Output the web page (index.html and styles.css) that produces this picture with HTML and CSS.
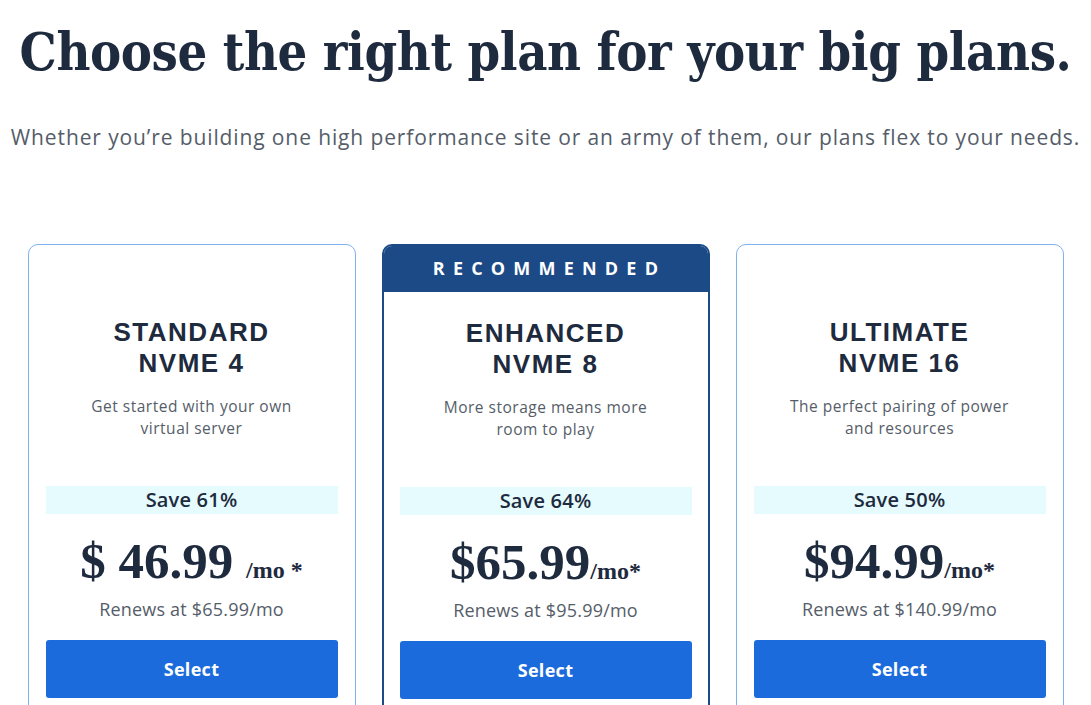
FILE: index.html
```html
<!DOCTYPE html>
<html lang="en">
<head>
<meta charset="utf-8">
<title>Plans</title>
<link rel="stylesheet" href="styles.css">
</head>
<body>
<main class="page">
  <h1 class="headline">Choose the right plan for your big plans.</h1>
  <p class="lead">Whether you’re building one high performance site or an army of them, our plans flex to your needs.</p>
  <section class="plans">
    <article class="card">
      <div class="badge"></div>
      <h2 class="plan-name"><span class="line">STANDARD</span><span class="line">NVME 4</span></h2>
      <p class="plan-desc">Get started with your own<br>virtual server</p>
      <div class="save">Save 61%</div>
      <div class="price">$ 46.99 <span class="per">/mo *</span></div>
      <div class="renew">Renews at $65.99/mo</div>
      <button class="select">Select</button>
    </article>
    <article class="card card-rec">
      <div class="badge">RECOMMENDED</div>
      <h2 class="plan-name"><span class="line">ENHANCED</span><span class="line">NVME 8</span></h2>
      <p class="plan-desc">More storage means more<br>room to play</p>
      <div class="save">Save 64%</div>
      <div class="price">$65.99<span class="per">/mo*</span></div>
      <div class="renew">Renews at $95.99/mo</div>
      <button class="select">Select</button>
    </article>
    <article class="card">
      <div class="badge"></div>
      <h2 class="plan-name"><span class="line">ULTIMATE</span><span class="line">NVME 16</span></h2>
      <p class="plan-desc">The perfect pairing of power<br>and resources</p>
      <div class="save">Save 50%</div>
      <div class="price">$94.99<span class="per">/mo*</span></div>
      <div class="renew">Renews at $140.99/mo</div>
      <button class="select">Select</button>
    </article>
  </section>
</main>
</body>
</html>
```

FILE: styles.css
```css
html, body {
  margin: 0;
  padding: 0;
  background: #ffffff;
}

body {
  font-family: "Open Sans", "Liberation Sans", sans-serif;
  color: #1e2a3d;
  overflow: hidden;
}

.page {
  padding-top: 19px;
}

.headline {
  margin: 0;
  text-align: center;
  font-family: "DejaVu Serif Condensed", "DejaVu Serif", serif;
  font-stretch: condensed;
  font-weight: 700;
  font-size: 52px;
  line-height: 66px;
  letter-spacing: -0.4px;
  color: #1e2a3d;
}

.lead {
  margin: 38px 0 0;
  text-align: center;
  font-size: 21px;
  line-height: 28px;
  color: #555d69;
  letter-spacing: 0.88px;
  white-space: nowrap;
}

.plans {
  display: grid;
  grid-template-columns: repeat(3, 328px);
  column-gap: 26px;
  justify-content: center;
  margin-top: 93px;
}

.card {
  border: 1px solid #7fb3f0;
  border-radius: 10px;
  padding: 0 17px 30px;
  display: flex;
  flex-direction: column;
  align-items: stretch;
  text-align: center;
}

.badge {
  height: 46px;
  margin: 0 -17px;
}

.card-rec {
  border: 2px solid #1c4a87;
  padding: 0 16px 30px;
}

.card-rec .badge {
  margin: 0 -16px;
  background: #1c4a87;
  border-radius: 8px 8px 0 0;
  color: #ffffff;
  font-weight: 700;
  font-size: 18px;
  letter-spacing: 8.2px;
  line-height: 44px;
  padding-left: 8px;
}

.plan-name {
  margin: 26px 0 0;
  font-family: "Liberation Sans", "Open Sans", sans-serif;
  font-size: 26px;
  font-weight: 700;
  letter-spacing: 1.5px;
  color: #1e2a3d;
  display: flex;
  flex-direction: column;
}

.plan-name .line {
  display: block;
  line-height: 31px;
}

.plan-desc {
  margin: 16px 0 0;
  font-size: 15.5px;
  line-height: 22px;
  letter-spacing: 0.5px;
  color: #555d69;
}

.save {
  margin-top: 47px;
  height: 28px;
  background: #e5fbfd;
  font-size: 20px;
  line-height: 28px;
  font-weight: 600;
  letter-spacing: 0.2px;
  color: #1e2a3d;
}

.price {
  margin-top: 20px;
  font-family: "Liberation Serif", "DejaVu Serif", serif;
  font-weight: 700;
  font-size: 51px;
  line-height: 54px;
  color: #1e2a3d;
}

.per {
  font-size: 24px;
}

.renew {
  margin-top: 0;
  font-size: 18px;
  line-height: 24px;
  letter-spacing: 0.2px;
  color: #555d69;
}

.select {
  margin-top: 19px;
  height: 58px;
  border: none;
  border-radius: 3px;
  background: #1b6bdc;
  color: #ffffff;
  font-family: "Open Sans", "Liberation Sans", sans-serif;
  font-weight: 700;
  font-size: 18px;
  letter-spacing: 0.3px;
  cursor: pointer;
}
```
